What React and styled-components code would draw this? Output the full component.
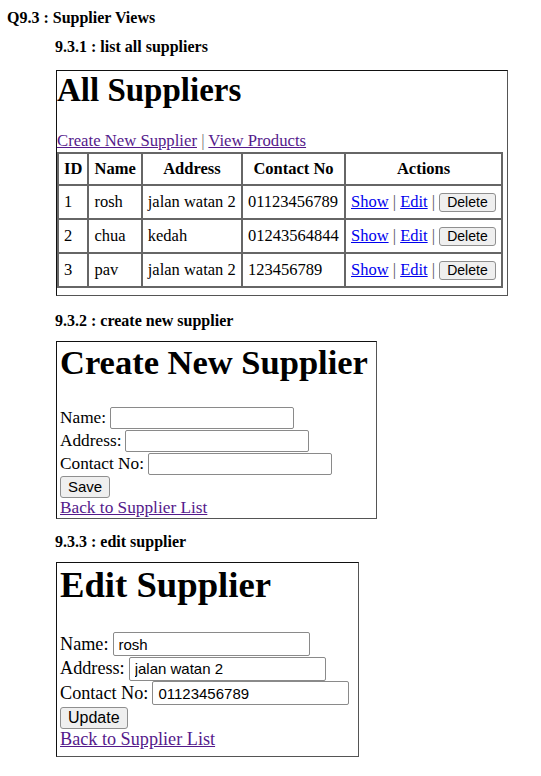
import React from "react";
import styled, { createGlobalStyle } from "styled-components";

const GlobalStyle = createGlobalStyle`
  html, body {
    margin: 0;
    padding: 0;
    background: #ffffff;
  }
  body {
    font-family: "Liberation Serif", "Times New Roman", serif;
    color: #000;
  }
`;

const Page = styled.div`
  width: 541px;
  padding: 9px 0 0 7px;
  box-sizing: border-box;
`;

const Heading = styled.div`
  font-size: 16px;
  font-weight: bold;
  line-height: 18px;
  margin: ${(p) => p.margin || "0"};
`;

const Frame = styled.div`
  width: ${(p) => p.width}px;
  height: ${(p) => p.height}px;
  margin-left: 49px;
  box-sizing: border-box;
  border: 1px solid #111;
  border-right-color: #555;
  border-bottom-color: #555;
  padding: ${(p) => p.pad || "0 0 0 3px"};
  overflow: hidden;
`;

const Title = styled.h1`
  margin: 0;
  font-size: ${(p) => p.size}px;
  line-height: ${(p) => Math.round(p.size * 1.15)}px;
  font-weight: bold;
  padding-top: ${(p) => p.top || 0}px;
  margin-bottom: ${(p) => p.gap}px;
`;

const Link = styled.a`
  color: ${(p) => (p.visited ? "#551a8b" : "#0000ee")};
  text-decoration: underline;
  cursor: pointer;
`;

const LinkLine = styled.div`
  font-size: ${(p) => p.size || 16.7}px;
  line-height: 20px;
  color: #777;
`;

const Table = styled.table`
  border-collapse: collapse;
  border: 2px solid #555;
  width: 446px;
  font-size: 16.5px;
  margin-top: 1px;
`;

const Th = styled.th`
  border: 2px solid #666;
  height: 30px;
  padding: 0 5px;
  font-weight: bold;
  text-align: center;
`;

const Td = styled.td`
  border: 2px solid #666;
  height: 32px;
  padding: 0 5px;
  white-space: nowrap;
`;

const Sep = styled.span`
  color: #555;
`;

const Button = styled.button`
  font-family: "Liberation Sans", Arial, sans-serif;
  font-size: ${(p) => p.size || 14}px;
  color: #000;
  background: #efefef;
  border: 1px solid #8f8f8f;
  border-radius: 3px;
  padding: 1px 7px;
  margin-top: ${(p) => p.top || 0}px;
  line-height: ${(p) => p.lh || 15}px;
`;

const Form = styled.form`
  display: flex;
  flex-direction: column;
  align-items: flex-start;
  font-size: ${(p) => p.size}px;
`;

const Field = styled.label`
  display: flex;
  align-items: center;
  gap: 4px;
  height: ${(p) => p.h}px;
`;

const Input = styled.input`
  width: ${(p) => p.w}px;
  height: ${(p) => p.ih}px;
  box-sizing: border-box;
  border: 1px solid #8a8a8a;
  border-radius: 2px;
  padding: 0 5px;
  font-family: "Liberation Sans", Arial, sans-serif;
  font-size: 15px;
  color: #000;
`;

const suppliers = [
  { id: 1, name: "rosh", address: "jalan watan 2", contact: "01123456789" },
  { id: 2, name: "chua", address: "kedah", contact: "01243564844" },
  { id: 3, name: "pav", address: "jalan watan 2", contact: "123456789" },
];

const fields = ["Name", "Address", "Contact No"];

const SupplierForm = ({ values, button, size, rowH, inputH, inputW, btnSize }) => (
  <Form size={size} onSubmit={(e) => e.preventDefault()}>
    {fields.map((f, i) => (
      <Field key={f} h={rowH}>
        {f}:
        <Input w={inputW} ih={inputH} defaultValue={values ? values[i] : ""} />
      </Field>
    ))}
    <Button size={btnSize} lh={18} top={1}>
      {button}
    </Button>
    <LinkLine size={size}>
      <Link visited>Back to Supplier List</Link>
    </LinkLine>
  </Form>
);

export default function App() {
  return (
    <Page>
      <GlobalStyle />
      <Heading>Q9.3 : Supplier Views</Heading>
      <Heading margin="11px 0 14px 48px">9.3.1 : list all suppliers</Heading>
      <Frame width={452} height={226} pad="0">
        <Title size={33} top={0} gap={22}>
          All Suppliers
        </Title>
        <LinkLine>
          <Link visited>Create New Supplier</Link> | <Link visited>View Products</Link>
        </LinkLine>
        <Table>
          <thead>
            <tr>
              <Th>ID</Th>
              <Th>Name</Th>
              <Th>Address</Th>
              <Th>Contact No</Th>
              <Th style={{ width: 145 }}>Actions</Th>
            </tr>
          </thead>
          <tbody>
            {suppliers.map((s) => (
              <tr key={s.id}>
                <Td>{s.id}</Td>
                <Td>{s.name}</Td>
                <Td>{s.address}</Td>
                <Td>{s.contact}</Td>
                <Td>
                  <Link>Show</Link> <Sep>|</Sep> <Link>Edit</Link> <Sep>|</Sep>{" "}
                  <Button>Delete</Button>
                </Td>
              </tr>
            ))}
          </tbody>
        </Table>
      </Frame>
      <Heading margin="16px 0 11px 48px">9.3.2 : create new supplier</Heading>
      <Frame width={321} height={178}>
        <Title size={34.5} top={0} gap={24}>
          Create New Supplier
        </Title>
        <SupplierForm
          button="Save"
          size={17.3}
          rowH={23}
          inputH={22}
          inputW={184}
          btnSize={15}
        />
      </Frame>
      <Heading margin="14px 0 11px 48px">9.3.3 : edit supplier</Heading>
      <Frame width={303} height={195}>
        <Title size={36.7} top={1} gap={26}>
          Edit Supplier
        </Title>
        <SupplierForm
          values={["rosh", "jalan watan 2", "01123456789"]}
          button="Update"
          size={18.2}
          rowH={24.5}
          inputH={24}
          inputW={197}
          btnSize={16}
        />
      </Frame>
    </Page>
  );
}
